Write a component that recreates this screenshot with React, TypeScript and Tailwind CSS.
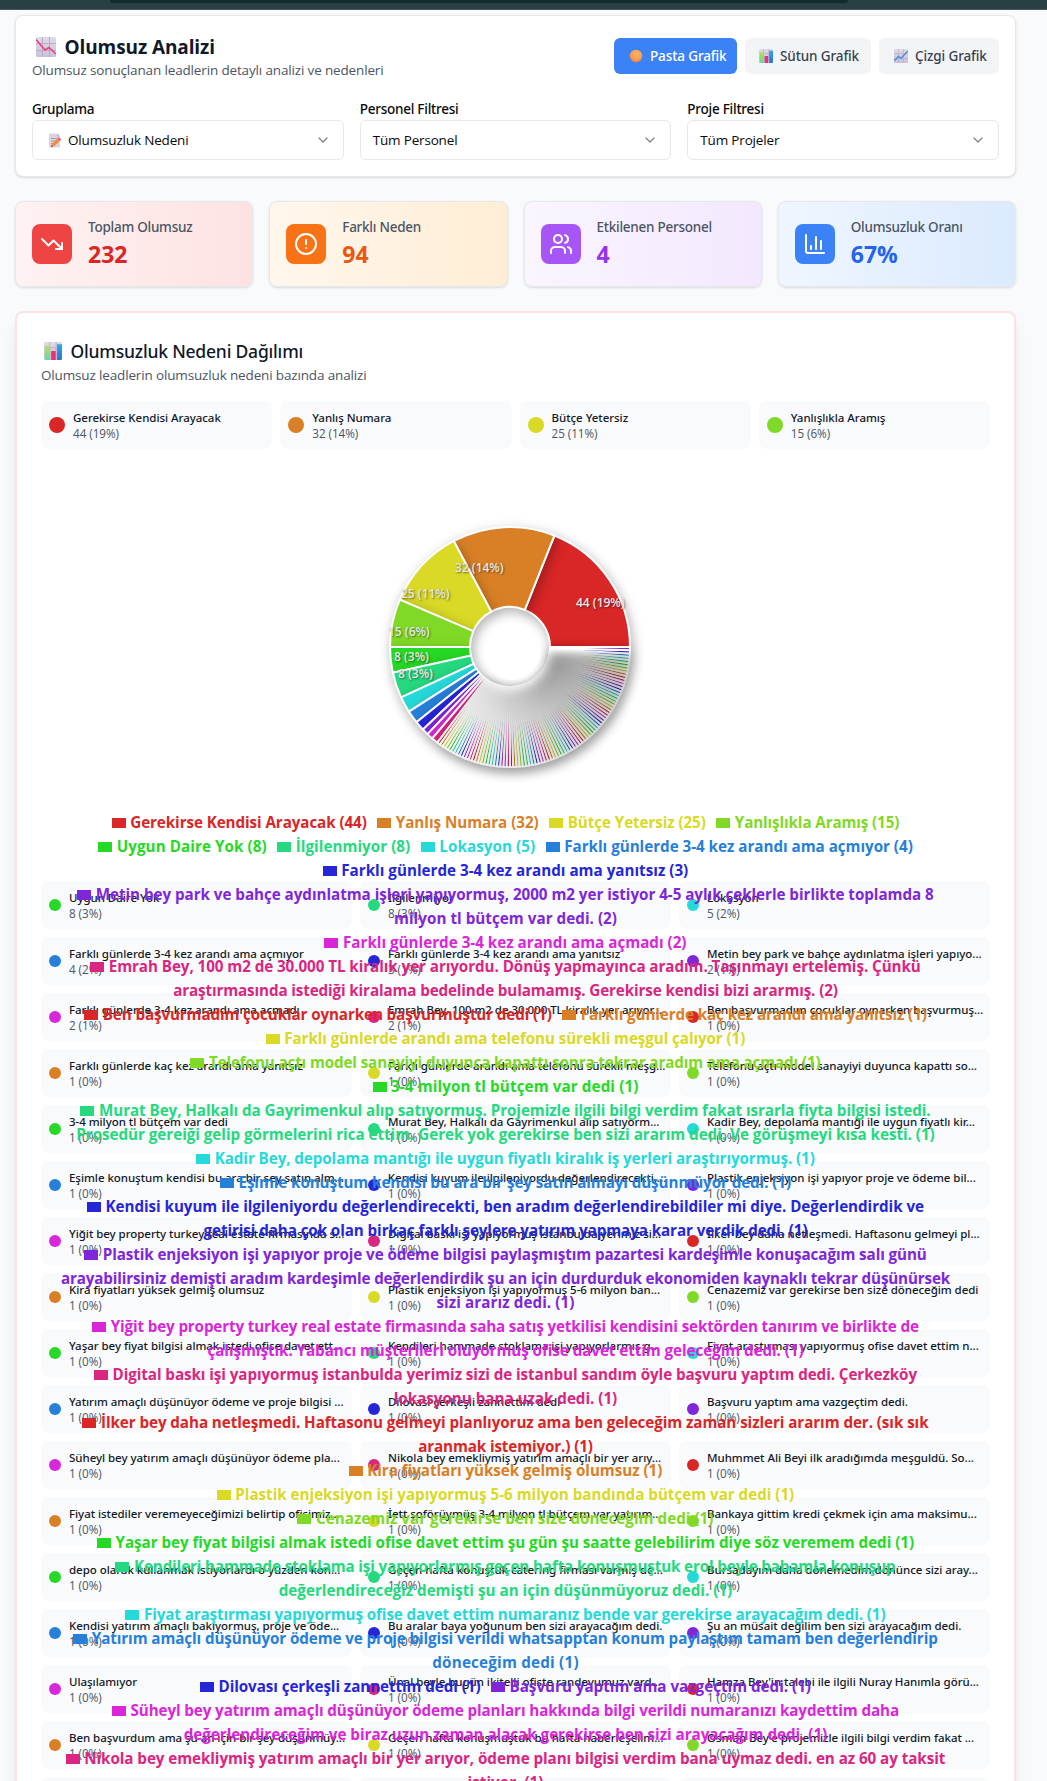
import { ChartColumn, ChevronDown, CircleAlert, TrendingDown, Users } from "lucide-react";
import type { ReactNode } from "react";

const hue = (i: number) => `hsl(${(i * 30) % 360}, 70%, 50%)`;

/* ---------- text measuring ---------- */

const ctx = document.createElement("canvas").getContext("2d");

function tracking(text: string, font: string, width: number) {
  if (!ctx) return "0px";
  ctx.font = font;
  return `${((width - ctx.measureText(text).width) / text.length).toFixed(3)}px`;
}

/* ---------- small picture icons ---------- */

function GridTile({ children, className }: { children: ReactNode; className: string }) {
  return (
    <svg viewBox="0 0 20 20" className={className}>
      <defs>
        <linearGradient id="tile" x1="0" y1="0" x2="0" y2="1">
          <stop offset="0" stopColor="#dfdbe6" />
          <stop offset="1" stopColor="#cdbfdc" />
        </linearGradient>
      </defs>
      <rect width="20" height="20" rx="1.6" fill="url(#tile)" />
      <path d="M6.5 0v20M13.5 0v20M0 6.5h20M0 13.5h20" stroke="#b5a9c2" strokeWidth="0.9" />
      {children}
    </svg>
  );
}

const FallingIcon = ({ className }: { className: string }) => (
  <GridTile className={className}>
    <path d="M0 2.5l9 10.5 4-2.5L20 17" fill="none" stroke="#e8407a" strokeWidth="1.6" />
  </GridTile>
);

const RisingIcon = ({ className }: { className: string }) => (
  <GridTile className={className}>
    <path d="M0.5 17l6-6.500 3.500 3L19.500 3" fill="none" stroke="#2f8be0" strokeWidth="1.8" />
  </GridTile>
);

const BarsIcon = ({ className }: { className: string }) => (
  <GridTile className={className}>
    <defs>
      <linearGradient id="barGreen" x1="0" y1="0" x2="0" y2="1">
        <stop offset="0" stopColor="#b4e05a" />
        <stop offset="1" stopColor="#5fdc9a" />
      </linearGradient>
      <linearGradient id="barBlue" x1="0" y1="0" x2="0" y2="1">
        <stop offset="0" stopColor="#35a4ec" />
        <stop offset="1" stopColor="#2c72cf" />
      </linearGradient>
    </defs>
    <path d="M1 4.500h5V20H2.500Q1 20 1 18.500z" fill="url(#barGreen)" />
    <path d="M8 10h5v10H8z" fill="#ea2f78" />
    <path d="M14.500 2.500H20V18.500Q20 20 18.500 20h-4z" fill="url(#barBlue)" />
  </GridTile>
);

const MemoIcon = () => (
  <svg viewBox="0 0 14 15" className="h-[15px] w-[14px]">
    <path d="M1 .5h8l3 3v11H1z" fill="#d9d3e4" />
    <path d="M9 .5v3h3z" fill="#b9afc8" />
    <path d="M3 5.500h6M3 8h5M3 10.500h3" stroke="#9d93ad" strokeWidth="0.9" />
    <path d="M3 14l1-3.500L9.500 5.500l2.500 2.300L6.500 13z" fill="#f58a3c" />
    <path d="M9.500 5.500l1.300-1.200 2.500 2.300L12 7.800z" fill="#f0506a" />
    <path d="M3 14l.6-2 1.300 1.400z" fill="#5b4a55" />
  </svg>
);

const PieBallIcon = () => (
  <svg viewBox="0 0 14 14" className="h-[14px] w-[14px]">
    <defs>
      <radialGradient id="ball" cx="0.55" cy="0.35" r="0.7">
        <stop offset="0" stopColor="#fdb95c" />
        <stop offset="0.7" stopColor="#f49a52" />
        <stop offset="1" stopColor="#d9705a" />
      </radialGradient>
    </defs>
    <circle cx="7" cy="7" r="6.300" fill="url(#ball)" />
    <path d="M4 4.500l1 1M7.500 3v1.200M9.500 6l1-.8M5 9l1-.7M8.500 9.500l.8.7" stroke="#d97b3f" strokeWidth="0.6" />
  </svg>
);

/* ---------- header ---------- */

function Select({ label, children }: { label: string; children: ReactNode }) {
  return (
    <div>
      <div className="font-['Noto_Sans'] text-[13.5px] leading-5 font-medium tracking-[-0.24px] text-[#09090b]">{label}</div>
      <div className="mt-[1px] flex h-10 items-center justify-between rounded-md border border-[#e5e7eb] bg-white pr-3 pl-3 text-[13.5px] tracking-[-0.17px] text-[#09090b]">
        <span className="flex items-center">{children}</span>
        <ChevronDown className="size-4 text-[#7f7f83]" strokeWidth={1.8} />
      </div>
    </div>
  );
}

const TAB = "flex h-9 items-center gap-[7px] rounded-md font-['Noto_Sans'] text-[13.5px] font-medium tracking-[-0.12px]";

function Header() {
  return (
    <section className="h-[162px] rounded-lg border border-[#e5e7eb] bg-white px-4 pt-[22px] shadow-sm">
      <div className="flex justify-between">
        <div>
          <h1 className="flex h-[18px] items-center gap-[9px] pl-[3.5px] text-[19px] font-bold tracking-[-0.1px] text-[#111827]">
            <FallingIcon className="size-5" />
            Olumsuz Analizi
          </h1>
          <p className="mt-1 text-[13.5px] leading-5 tracking-[-0.15px] text-[#4b5563]">
            Olumsuz sonuçlanan leadlerin detaylı analizi ve nedenleri
          </p>
        </div>
        <div className="flex gap-2">
          <button className={`${TAB} w-[123px] bg-[#3b82f6] pl-[15px] text-white`}>
            <PieBallIcon />
            Pasta Grafik
          </button>
          <button className={`${TAB} w-[126px] bg-[#f3f4f6] pl-3.5 text-[#374151]`}>
            <BarsIcon className="size-3.5" />
            Sütun Grafik
          </button>
          <button className={`${TAB} w-[120px] bg-[#f3f4f6] pl-[15px] text-[#374151]`}>
            <RisingIcon className="size-3.5" />
            Çizgi Grafik
          </button>
        </div>
      </div>
      <div className="mt-[19px] grid grid-cols-3 gap-4">
        <Select label="Gruplama">
          <span className="mr-1.5 ml-[3px]">
            <MemoIcon />
          </span>
          Olumsuzluk Nedeni
        </Select>
        <Select label="Personel Filtresi">Tüm Personel</Select>
        <Select label="Proje Filtresi">Tüm Projeler</Select>
      </div>
    </section>
  );
}

/* ---------- stat cards ---------- */

const STATS = [
  { label: "Toplam Olumsuz", value: "232", Icon: TrendingDown, card: "from-[#fef2f2] to-[#fee2e2]", icon: "bg-[#ef4444]", text: "text-[#dc2626]" },
  { label: "Farklı Neden", value: "94", Icon: CircleAlert, card: "from-[#fff7ed] to-[#ffedd5]", icon: "bg-[#f97316]", text: "text-[#ea580c]" },
  { label: "Etkilenen Personel", value: "4", Icon: Users, card: "from-[#faf5ff] to-[#f3e8ff]", icon: "bg-[#a855f7]", text: "text-[#9333ea]" },
  { label: "Olumsuzluk Oranı", value: "67%", Icon: ChartColumn, card: "from-[#eff6ff] to-[#dbeafe]", icon: "bg-[#3b82f6]", text: "text-[#2563eb]" },
];

function Stats() {
  return (
    <section className="mt-6 grid grid-cols-4 gap-4">
      {STATS.map(({ label, value, Icon, card, icon, text }) => (
        <div key={label} className={`flex h-[86px] items-center gap-4 rounded-lg border border-[#e5e7eb] bg-linear-to-r px-4 shadow-sm ${card}`}>
          <div className={`grid size-10 place-items-center rounded-lg text-white ${icon}`}>
            <Icon className="size-6" />
          </div>
          <div className="-mt-px">
            <p className="font-['Noto_Sans'] text-[13.5px] leading-5 font-medium tracking-[-0.25px] text-[#4b5563]">{label}</p>
            <p className={`mt-px text-[23px] leading-8 font-bold ${text}`}>{value}</p>
          </div>
        </div>
      ))}
    </section>
  );
}

/* ---------- pie ---------- */

const VALUES = [44, 32, 25, 15, 8, 8, 5, 4, 3, 2, 2, 2, ...Array<number>(82).fill(1)];
const TOTAL = 232;
const CX = 150;
const CY = 150;

function point(r: number, angle: number) {
  return `${(CX + r * Math.cos(angle)).toFixed(3)} ${(CY - r * Math.sin(angle)).toFixed(3)}`;
}

function sector(from: number, to: number) {
  return `M${point(120, from)}A120 120 0 0 0 ${point(120, to)}L${point(40, to)}A40 40 0 0 1 ${point(40, from)}Z`;
}

const PIE_LABELS = [
  { x: 216, y: 110, t: "44 (19%)" },
  { x: 95, y: 75, t: "32 (14%)" },
  { x: 41, y: 101, t: "25 (11%)" },
  { x: 28, y: 139, t: "15 (6%)" },
  { x: 34, y: 164, t: "8 (3%)" },
  { x: 38, y: 181, t: "8 (3%)" },
];

function Pie() {
  let acc = 0;
  const slices = VALUES.map((v) => {
    const from = (acc / TOTAL) * Math.PI * 2;
    acc += v;
    return [from, (acc / TOTAL) * Math.PI * 2];
  });
  return (
    <svg width="300" height="300" viewBox="0 0 300 300" className="overflow-visible">
      {slices.map(([from, to], i) => (
        <path
          key={i}
          d={sector(from, to)}
          fill={hue(i)}
          stroke="#fff"
          strokeWidth="2"
          className="drop-shadow-[2px_4px_6px_rgba(0,0,0,0.3)]"
        />
      ))}
      {PIE_LABELS.map(({ x, y, t }) => (
        <text key={y} x={x} y={y} fill="#e6e6e6" className="text-[12px] font-semibold [text-shadow:1px_1px_2px_rgba(0,0,0,0.5)]">
          {t}
        </text>
      ))}
    </svg>
  );
}

/* ---------- legend over the chart ---------- */

type Segment = { i: number; t: string; w: number; cont?: boolean };

const LEGEND: Segment[][] = [
  [
    { i: 0, t: "Gerekirse Kendisi Arayacak (44)", w: 236.5 },
    { i: 1, t: "Yanlış Numara (32)", w: 143 },
    { i: 2, t: "Bütçe Yetersiz (25)", w: 138 },
    { i: 3, t: "Yanlışlıkla Aramış (15)", w: 164.5 },
  ],
  [
    { i: 4, t: "Uygun Daire Yok (8)", w: 150 },
    { i: 5, t: "İlgilenmiyor (8)", w: 114.5 },
    { i: 6, t: "Lokasyon (5)", w: 96 },
    { i: 7, t: "Farklı günlerde 3-4 kez arandı ama açmıyor (4)", w: 348.5 },
  ],
  [{ i: 8, t: "Farklı günlerde 3-4 kez arandı ama yanıtsız (3)", w: 347 }],
  [{ i: 9, t: "Metin bey park ve bahçe aydınlatma işleri yapıyormuş, 2000 m2 yer istiyor 4-5 aylık çeklerle birlikte toplamda 8", w: 838 }],
  [{ i: 9, t: "milyon tl bütçem var dedi. (2)", w: 223, cont: true }],
  [{ i: 10, t: "Farklı günlerde 3-4 kez arandı ama açmadı (2)", w: 343.5 }],
  [{ i: 11, t: "Emrah Bey, 100 m2 de 30.000 TL kiralık yer arıyordu. Dönüş yapmayınca aradım. Taşınmayı ertelemiş. Çünkü", w: 812 }],
  [{ i: 11, t: "araştırmasında istediği kiralama bedelinde bulamamış. Gerekirse kendisi bizi ararmış. (2)", w: 664.5, cont: true }],
  [
    { i: 12, t: "Ben başvurmadım çocuklar oynarken başvurmuştur dedi (1)", w: 449 },
    { i: 13, t: "Farklı günlerde kaç kez arandı ama yanıtsız (1)", w: 346 },
  ],
  [{ i: 14, t: "Farklı günlerde arandı ama telefonu sürekli meşgul çalıyor (1)", w: 461 }],
  [{ i: 15, t: "Telefonu açtı model sanayiyi duyunca kapattı sonra tekrar aradım ama açmadı (1)", w: 611.5 }],
  [{ i: 16, t: "3-4 milyon tl bütçem var dedi (1)", w: 247.5 }],
  [{ i: 17, t: "Murat Bey, Halkalı da Gayrimenkul alıp satıyormuş. Projemizle ilgili bilgi verdim fakat ısrarla fiyta bilgisi istedi.", w: 831.5 }],
  [{ i: 17, t: "Prosedür gereiği gelip görmelerini rica ettim. Gerek yok gerekirse ben sizi ararım dedi. Ve görüşmeyi kısa kesti. (1)", w: 858.5, cont: true }],
  [{ i: 18, t: "Kadir Bey, depolama mantığı ile uygun fiyatlı kiralık iş yerleri araştırıyormuş. (1)", w: 600 }],
  [{ i: 19, t: "Eşimle konuştum kendisi bu ara bir şey satın almayı düşünmüyor dedi. (1)", w: 552.5 }],
  [{ i: 20, t: "Kendisi kuyum ile ilgileniyordu değerlendirecekti, ben aradım değerlendirebildiler mi diye. Değerlendirdik ve", w: 818.5 }],
  [{ i: 20, t: "getirisi daha çok olan birkaç farklı şeylere yatırım yapmaya karar verdik dedi. (1)", w: 604, cont: true }],
  [{ i: 21, t: "Plastik enjeksiyon işi yapıyor proje ve ödeme bilgisi paylaşmıştım pazartesi kardeşimle konuşacağım salı günü", w: 824 }],
  [{ i: 21, t: "arayabilirsiniz demişti aradım kardeşimle değerlendirdik şu an için durdurduk ekonomiden kaynaklı tekrar düşünürsek", w: 889, cont: true }],
  [{ i: 21, t: "sizi ararız dedi. (1)", w: 138, cont: true }],
  [{ i: 22, t: "Yiğit bey property turkey real estate firmasında saha satış yetkilisi kendisini sektörden tanırım ve birlikte de", w: 808 }],
  [{ i: 22, t: "çalışmıştık. Yabancı müşterileri oluyormuş ofise davet ettim geleceğim dedi. (1)", w: 596, cont: true }],
  [{ i: 23, t: "Digital baskı işi yapıyormuş istanbulda yerimiz sizi de istanbul sandım öyle başvuru yaptım dedi. Çerkezköy", w: 804.5 }],
  [{ i: 23, t: "lokasyonu bana uzak dedi. (1)", w: 223.5, cont: true }],
  [{ i: 24, t: "İlker bey daha netleşmedi. Haftasonu gelmeyi planlıyoruz ama ben geleceğim zaman sizleri ararım der. (sık sık", w: 827.5 }],
  [{ i: 24, t: "aranmak istemiyor.) (1)", w: 174.5, cont: true }],
  [{ i: 25, t: "Kira fiyatları yüksek gelmiş olumsuz (1)", w: 295 }],
  [{ i: 26, t: "Plastik enjeksiyon işi yapıyormuş 5-6 milyon bandında bütçem var dedi (1)", w: 559 }],
  [{ i: 27, t: "Cenazemiz var gerekirse ben size döneceğim dedi (1)", w: 397.5 }],
  [{ i: 28, t: "Yaşar bey fiyat bilgisi almak istedi ofise davet ettim şu gün şu saatte gelebilirim diye söz veremem dedi (1)", w: 798.5 }],
  [{ i: 29, t: "Kendileri hammade stoklama işi yapıyorlarmış geçen hafta konuşmuştuk erol beyle babamla konuşup", w: 761.5 }],
  [{ i: 29, t: "değerlendireceğiz demişti şu an için düşünmüyoruz dedi. (1)", w: 453.5, cont: true }],
  [{ i: 30, t: "Fiyat araştırması yapıyormuş ofise davet ettim numaranız bende var gerekirse arayacağım dedi. (1)", w: 741.5 }],
  [{ i: 31, t: "Yatırım amaçlı düşünüyor ödeme ve proje bilgisi verildi whatsapptan konum paylaştım tamam ben değerlendirip", w: 846 }],
  [{ i: 31, t: "döneceğim dedi (1)", w: 146.5, cont: true }],
  [
    { i: 32, t: "Dilovası çerkeşli zannettim dedi (1)", w: 262 },
    { i: 33, t: "Başvuru yaptım ama vazgeçtim dedi. (1)", w: 301.5 },
  ],
  [{ i: 34, t: "Süheyl bey yatırım amaçlı düşünüyor ödeme planları hakkında bilgi verildi numaranızı kaydettim daha", w: 768.5 }],
  [{ i: 34, t: "değerlendireceğim ve biraz uzun zaman alacak gerekirse ben sizi arayacağım dedi. (1)", w: 643.5, cont: true }],
  [{ i: 35, t: "Nikola bey emekliymiş yatırım amaçlı bir yer arıyor, ödeme planı bilgisi verdim bana uymaz dedi. en az 60 ay taksit", w: 861 }],
  [{ i: 35, t: "istiyor. (1)", w: 76, cont: true }],
];

function Legend() {
  return (
    <div className="absolute top-[360.5px] right-5 left-0 text-[15.2px] leading-6 font-bold whitespace-nowrap">
      {LEGEND.map((line, n) => (
        <div key={n} className="flex h-6 justify-center gap-[10.5px]">
          {line.map(({ i, t, w, cont }) => (
            <span key={t} className="flex items-center gap-[4.5px]" style={{ color: hue(i) }}>
              {!cont && <span className="mt-[3px] h-[10.5px] w-3.5 bg-current" />}
              <span style={{ letterSpacing: tracking(t, '700 15.2px "Open Sans"', w) }}>{t}</span>
            </span>
          ))}
        </div>
      ))}
    </div>
  );
}

/* ---------- distribution lists ---------- */

const TOP = [
  ["Gerekirse Kendisi Arayacak", "44 (19%)"],
  ["Yanlış Numara", "32 (14%)"],
  ["Bütçe Yetersiz", "25 (11%)"],
  ["Yanlışlıkla Aramış", "15 (6%)"],
];

const REST = [
  "Uygun Daire Yok", "İlgilenmiyor", "Lokasyon",
  "Farklı günlerde 3-4 kez arandı ama açmıyor", "Farklı günlerde 3-4 kez arandı ama yanıtsız", "Metin bey park ve bahçe aydınlatma işleri yapıyo...",
  "Farklı günlerde 3-4 kez arandı ama açmadı", "Emrah Bey, 100 m2 de 30.000 TL kiralık yer arıyor...", "Ben başvurmadım çocuklar oynarken başvurmuş...",
  "Farklı günlerde kaç kez arandı ama yanıtsız", "Farklı günlerde arandı ama telefonu sürekli meşg...", "Telefonu açtı model sanayiyi duyunca kapattı so...",
  "3-4 milyon tl bütçem var dedi", "Murat Bey, Halkalı da Gayrimenkul alıp satıyorm...", "Kadir Bey, depolama mantığı ile uygun fiyatlı kir...",
  "Eşimle konuştum kendisi bu ara bir şey satın alm...", "Kendisi kuyum ile ilgileniyordu değerlendirecekti,...", "Plastik enjeksiyon işi yapıyor proje ve ödeme bil...",
  "Yiğit bey property turkey real estate firmasında s...", "Digital baskı işi yapıyormuş istanbulda yerimiz si...", "İlker bey daha netleşmedi. Haftasonu gelmeyi pl...",
  "Kira fiyatları yüksek gelmiş olumsuz", "Plastik enjeksiyon işi yapıyormuş 5-6 milyon ban...", "Cenazemiz var gerekirse ben size döneceğim dedi",
  "Yaşar bey fiyat bilgisi almak istedi ofise davet ett...", "Kendileri hammade stoklama işi yapıyorlarmış g...", "Fiyat araştırması yapıyormuş ofise davet ettim n...",
  "Yatırım amaçlı düşünüyor ödeme ve proje bilgisi ...", "Dilovası çerkeşli zannettim dedi", "Başvuru yaptım ama vazgeçtim dedi.",
  "Süheyl bey yatırım amaçlı düşünüyor ödeme pla...", "Nikola bey emekliymiş yatırım amaçlı bir yer arıy...", "Muhmmet Ali Beyi ilk aradığımda meşguldü. So...",
  "Fiyat istediler veremeyeceğimizi belirtip ofisimiz...", "İett şoförüymüş 3-4 milyon tl bütçem var yatırım...", "Bankaya gittim kredi çekmek için ama maksimu...",
  "depo olarak kullanmak istiyorlardı o yüzden kon...", "Geçen hafta konuştuk catering firması varmış de...", "Bursadayım daha dönemedim dönünce sizi aray...",
  "Kendisi yatırım amaçlı bakıyormuş, proje ve öde...", "Bu aralar baya yoğunum ben sizi arayacağım dedi.", "Şu an müsait değilim ben sizi arayacağım dedi.",
  "Ulaşılamıyor", "Ünal beyle bugün ikitelli ofiste randevumuz vard...", "Hamza Bey'in talebi ile ilgili Nuray Hanımla görü...",
  "Ben başvurdum ama şu an için bir şey düşünmüy...", "Geçen hafta konuşmuştuk bu hafta haberleşelim...", "Osman Bey'e projemizle ilgili bilgi verdim fakat ...",
];

const COUNTS = ["8 (3%)", "8 (3%)", "5 (2%)", "4 (2%)", "3 (1%)", "2 (1%)", "2 (1%)", "2 (1%)"];

function ItemText({ name, count }: { name: string; count: string }) {
  return (
    <div className="min-w-0 pt-px text-[11.7px] whitespace-nowrap">
      <p className="font-['Noto_Sans'] text-[11.5px] leading-4 font-medium tracking-[-0.04px] text-[#111827]">{name}</p>
      <p className="leading-[15px] tracking-[-0.05px] text-[#4b5563]">{count}</p>
    </div>
  );
}

function Distribution() {
  return (
    <section className="mt-6 h-[1600px] rounded-lg border-2 border-[#fee2e2] bg-white px-6 pt-[26px] shadow-lg">
      <h2 className="flex h-6 items-center gap-[9px] pl-[2.5px] font-['Noto_Sans'] text-[17.5px] font-medium tracking-[-0.2px] text-[#111827]">
        <BarsIcon className="size-[18px]" />
        Olumsuzluk Nedeni Dağılımı
      </h2>
      <p className="mt-0.5 text-[13.5px] leading-5 tracking-[-0.15px] text-[#4b5563]">Olumsuz leadlerin olumsuzluk nedeni bazında analizi</p>
      <div className="mt-4 grid grid-cols-4 gap-2">
        {TOP.map(([name, count], i) => (
          <div key={name} className="flex h-12 items-center gap-2 rounded-lg bg-[#f9fafb] px-2">
            <span className="size-4 rounded-full" style={{ backgroundColor: hue(i) }} />
            <ItemText name={name} count={count} />
          </div>
        ))}
      </div>
      <div className="relative h-[432px] pt-12 pl-[319px]">
        <Pie />
        <Legend />
      </div>
      <div className="grid grid-cols-3 gap-2">
        {REST.map((name, i) => (
          <div key={i} className="flex h-12 items-center gap-2 rounded-lg bg-[#f9fafb] px-2">
            <span className="size-3 rounded-full" style={{ backgroundColor: hue(i + 4) }} />
            <ItemText name={name} count={COUNTS[i] ?? "1 (0%)"} />
          </div>
        ))}
        {[0, 1, 2].map((i) => (
          <div key={i} className="h-12 rounded-lg bg-[#f9fafb]" />
        ))}
      </div>
    </section>
  );
}

export default function App() {
  return (
    <div className="h-[1781px] w-full overflow-hidden bg-[#f9fafc] font-['Open_Sans',sans-serif]">
      <div className="flex h-2.5 items-start justify-center border-b border-[#4a5558] bg-[#283f43] pr-[90px]">
        <div className="h-[3px] w-[738px] rounded-b-lg bg-[#12292d]" />
      </div>
      <main className="mt-[5px] ml-[15px] w-[1001px]">
        <Header />
        <Stats />
        <Distribution />
      </main>
    </div>
  );
}
